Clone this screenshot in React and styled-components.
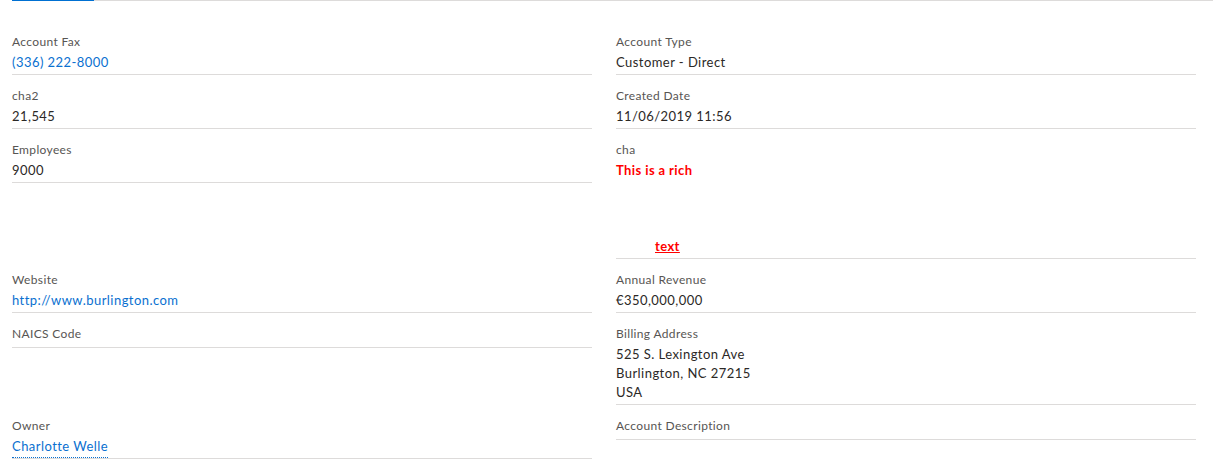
import React from "react";
import styled, { createGlobalStyle } from "styled-components";

const GlobalStyle = createGlobalStyle`
  html, body {
    margin: 0;
    padding: 0;
    background: #ffffff;
  }
  body {
    font-family: Lato, "Noto Sans", "Liberation Sans", sans-serif;
    -webkit-font-smoothing: antialiased;
  }
`;

const Page = styled.div`
  width: 1215px;
  height: 474px;
  overflow: hidden;
  background: #ffffff;
`;

const TabStrip = styled.div`
  display: flex;
  margin: 0 2px 0 12px;
  height: 2px;
`;

const ActiveTab = styled.div`
  width: 82px;
  height: 1px;
  background: #0070d2;
`;

const TabRest = styled.div`
  flex: 1;
  height: 0;
  border-top: 1px solid #dddbda;
`;

const FieldGrid = styled.div`
  display: grid;
  grid-template-columns: 580px 580px;
  column-gap: 24px;
  align-items: start;
  padding: 19px 12px 0 12px;
`;

const Field = styled.div`
  padding-top: 12px;
  border-bottom: 1px solid #dddbda;
`;

const Label = styled.div`
  font-size: 12px;
  line-height: 18px;
  letter-spacing: 0.35px;
  color: #575553;
`;

const Value = styled.div`
  font-size: 13px;
  line-height: 19px;
  letter-spacing: 0.45px;
  color: #2b2826;
  padding: 2px 0 2px 0;
`;

const Link = styled.a`
  color: #0a70d0;
  text-decoration: none;
  ${(p) => (p.$dotted ? "border-bottom: 1px dotted #0a70d0; padding-bottom: 3px;" : "")}
`;

const RichLine = styled.div`
  color: #ff0000;
  font-weight: 700;
  letter-spacing: 0.4px;
  padding-left: ${(p) => p.$indent || 0}px;
`;

const RichGap = styled.div`
  height: 57px;
`;

const AddressLine = styled.div``;

const fields = [
  { label: "Account Fax", value: <Link href="#">(336) 222-8000</Link> },
  { label: "Account Type", value: "Customer - Direct" },
  { label: "cha2", value: "21,545" },
  { label: "Created Date", value: "11/06/2019 11:56" },
  { label: "Employees", value: "9000" },
  {
    label: "cha",
    value: (
      <>
        <RichLine>This is a rich</RichLine>
        <RichGap />
        <RichLine $indent={39}>
          <u>text</u>
        </RichLine>
      </>
    ),
  },
  { label: "Website", value: <Link href="#">http://www.burlington.com</Link> },
  { label: "Annual Revenue", value: "€350,000,000" },
  { label: "NAICS Code", value: null },
  {
    label: "Billing Address",
    value: (
      <>
        <AddressLine>525 S. Lexington Ave</AddressLine>
        <AddressLine>Burlington, NC 27215</AddressLine>
        <AddressLine>USA</AddressLine>
      </>
    ),
  },
  {
    label: "Owner",
    value: (
      <Link href="#" $dotted>
        Charlotte Welle
      </Link>
    ),
  },
  { label: "Account Description", value: null },
];

export default function App() {
  return (
    <Page>
      <GlobalStyle />
      <TabStrip>
        <ActiveTab />
        <TabRest />
      </TabStrip>
      <FieldGrid>
        {fields.map((f) => (
          <Field key={f.label}>
            <Label>{f.label}</Label>
            <Value>{f.value}</Value>
          </Field>
        ))}
      </FieldGrid>
    </Page>
  );
}
